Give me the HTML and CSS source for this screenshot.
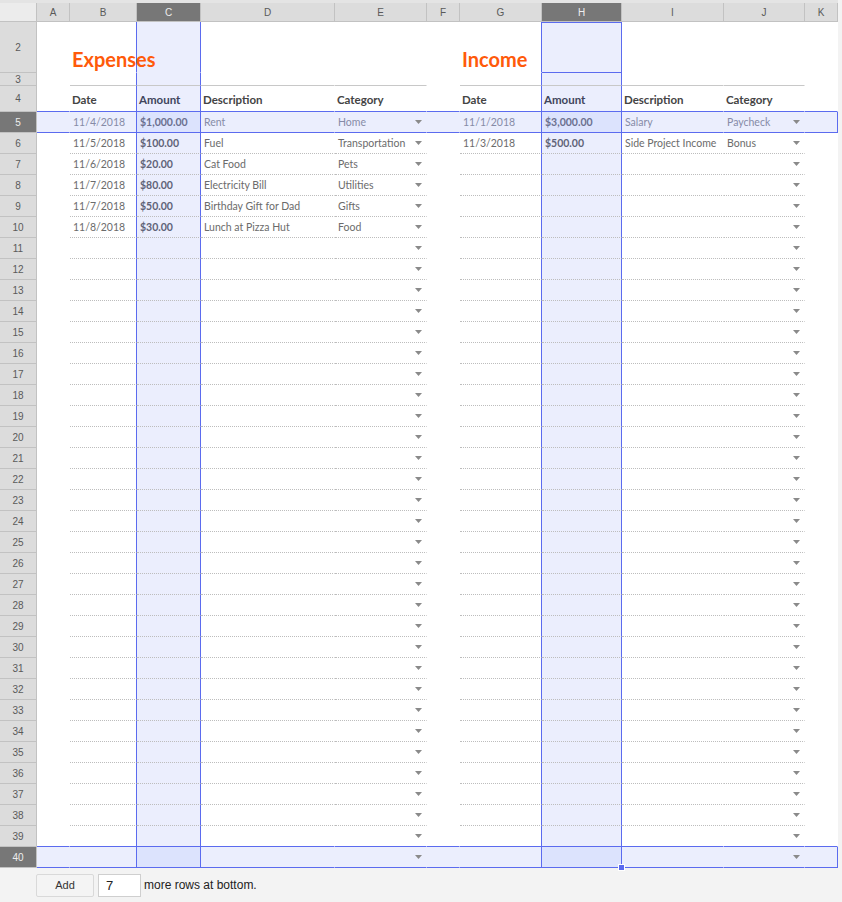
FILE: index.html
```html
<!DOCTYPE html>
<html>
<head>
<meta charset="utf-8">
<link rel="stylesheet" href="styles.css">
</head>
<body>
<div class="sheet">
  <div class="colhdr">
    <div class="corner"></div><div>A</div><div>B</div><div class="on">C</div><div>D</div><div>E</div><div>F</div><div>G</div><div class="on">H</div><div>I</div><div>J</div><div>K</div>
  </div>
  <div class="row s r2"><div>2</div><div></div><div class="title">Expenses</div><div></div><div></div><div></div><div></div><div class="title">Income</div><div class="active"></div><div></div><div></div><div></div></div>
  <div class="row s r3 line"><div>3</div><div></div><div></div><div></div><div></div><div></div><div></div><div></div><div></div><div></div><div></div><div></div></div>
  <div class="row s r4 hdr above"><div>4</div><div></div><div>Date</div><div>Amount</div><div>Description</div><div>Category</div><div></div><div>Date</div><div>Amount</div><div>Description</div><div>Category</div><div></div></div>
  <div class="row s dd sel"><div>5</div><div></div><div>11/4/2018</div><div>$1,000.00</div><div>Rent</div><div>Home</div><div></div><div>11/1/2018</div><div>$3,000.00</div><div>Salary</div><div>Paycheck</div><div></div></div>
  <div class="row s d dd"><div>6</div><div></div><div>11/5/2018</div><div>$100.00</div><div>Fuel</div><div>Transportation</div><div></div><div>11/3/2018</div><div>$500.00</div><div>Side Project Income</div><div>Bonus</div><div></div></div>
  <div class="row s d dd"><div>7</div><div></div><div>11/6/2018</div><div>$20.00</div><div>Cat Food</div><div>Pets</div><div></div><div></div><div></div><div></div><div></div><div></div></div>
  <div class="row s d dd"><div>8</div><div></div><div>11/7/2018</div><div>$80.00</div><div>Electricity Bill</div><div>Utilities</div><div></div><div></div><div></div><div></div><div></div><div></div></div>
  <div class="row s d dd"><div>9</div><div></div><div>11/7/2018</div><div>$50.00</div><div>Birthday Gift for Dad</div><div>Gifts</div><div></div><div></div><div></div><div></div><div></div><div></div></div>
  <div class="row s d dd"><div>10</div><div></div><div>11/8/2018</div><div>$30.00</div><div>Lunch at Pizza Hut</div><div>Food</div><div></div><div></div><div></div><div></div><div></div><div></div></div>
  <div class="row s d dd"><div>11</div><div></div><div></div><div></div><div></div><div></div><div></div><div></div><div></div><div></div><div></div><div></div></div>
  <div class="row s d dd"><div>12</div><div></div><div></div><div></div><div></div><div></div><div></div><div></div><div></div><div></div><div></div><div></div></div>
  <div class="row s d dd"><div>13</div><div></div><div></div><div></div><div></div><div></div><div></div><div></div><div></div><div></div><div></div><div></div></div>
  <div class="row s d dd"><div>14</div><div></div><div></div><div></div><div></div><div></div><div></div><div></div><div></div><div></div><div></div><div></div></div>
  <div class="row s d dd"><div>15</div><div></div><div></div><div></div><div></div><div></div><div></div><div></div><div></div><div></div><div></div><div></div></div>
  <div class="row s d dd"><div>16</div><div></div><div></div><div></div><div></div><div></div><div></div><div></div><div></div><div></div><div></div><div></div></div>
  <div class="row s d dd"><div>17</div><div></div><div></div><div></div><div></div><div></div><div></div><div></div><div></div><div></div><div></div><div></div></div>
  <div class="row s d dd"><div>18</div><div></div><div></div><div></div><div></div><div></div><div></div><div></div><div></div><div></div><div></div><div></div></div>
  <div class="row s d dd"><div>19</div><div></div><div></div><div></div><div></div><div></div><div></div><div></div><div></div><div></div><div></div><div></div></div>
  <div class="row s d dd"><div>20</div><div></div><div></div><div></div><div></div><div></div><div></div><div></div><div></div><div></div><div></div><div></div></div>
  <div class="row s d dd"><div>21</div><div></div><div></div><div></div><div></div><div></div><div></div><div></div><div></div><div></div><div></div><div></div></div>
  <div class="row s d dd"><div>22</div><div></div><div></div><div></div><div></div><div></div><div></div><div></div><div></div><div></div><div></div><div></div></div>
  <div class="row s d dd"><div>23</div><div></div><div></div><div></div><div></div><div></div><div></div><div></div><div></div><div></div><div></div><div></div></div>
  <div class="row s d dd"><div>24</div><div></div><div></div><div></div><div></div><div></div><div></div><div></div><div></div><div></div><div></div><div></div></div>
  <div class="row s d dd"><div>25</div><div></div><div></div><div></div><div></div><div></div><div></div><div></div><div></div><div></div><div></div><div></div></div>
  <div class="row s d dd"><div>26</div><div></div><div></div><div></div><div></div><div></div><div></div><div></div><div></div><div></div><div></div><div></div></div>
  <div class="row s d dd"><div>27</div><div></div><div></div><div></div><div></div><div></div><div></div><div></div><div></div><div></div><div></div><div></div></div>
  <div class="row s d dd"><div>28</div><div></div><div></div><div></div><div></div><div></div><div></div><div></div><div></div><div></div><div></div><div></div></div>
  <div class="row s d dd"><div>29</div><div></div><div></div><div></div><div></div><div></div><div></div><div></div><div></div><div></div><div></div><div></div></div>
  <div class="row s d dd"><div>30</div><div></div><div></div><div></div><div></div><div></div><div></div><div></div><div></div><div></div><div></div><div></div></div>
  <div class="row s d dd"><div>31</div><div></div><div></div><div></div><div></div><div></div><div></div><div></div><div></div><div></div><div></div><div></div></div>
  <div class="row s d dd"><div>32</div><div></div><div></div><div></div><div></div><div></div><div></div><div></div><div></div><div></div><div></div><div></div></div>
  <div class="row s d dd"><div>33</div><div></div><div></div><div></div><div></div><div></div><div></div><div></div><div></div><div></div><div></div><div></div></div>
  <div class="row s d dd"><div>34</div><div></div><div></div><div></div><div></div><div></div><div></div><div></div><div></div><div></div><div></div><div></div></div>
  <div class="row s d dd"><div>35</div><div></div><div></div><div></div><div></div><div></div><div></div><div></div><div></div><div></div><div></div><div></div></div>
  <div class="row s d dd"><div>36</div><div></div><div></div><div></div><div></div><div></div><div></div><div></div><div></div><div></div><div></div><div></div></div>
  <div class="row s d dd"><div>37</div><div></div><div></div><div></div><div></div><div></div><div></div><div></div><div></div><div></div><div></div><div></div></div>
  <div class="row s d dd"><div>38</div><div></div><div></div><div></div><div></div><div></div><div></div><div></div><div></div><div></div><div></div><div></div></div>
  <div class="row s dd above"><div>39</div><div></div><div></div><div></div><div></div><div></div><div></div><div></div><div></div><div></div><div></div><div></div></div>
  <div class="row s dd sel"><div>40</div><div></div><div></div><div></div><div></div><div></div><div></div><div></div><div></div><div></div><div></div><div></div></div>
  <div class="handle"></div>
</div>
<div class="footer">
  <button class="add">Add</button>
  <div class="count">7</div>
  <span class="more">more rows at bottom.</span>
</div>
</body>
</html>
```
FILE: styles.css
```css
html, body {
  margin: 0;
  padding: 0;
  background: #f3f3f3;
}
body {
  width: 842px;
  height: 902px;
  overflow: hidden;
}
.sheet {
  position: relative;
  width: 838px;
  background: #ffffff;
}
.colhdr, .row {
  display: grid;
  grid-template-columns: 37px 33px 67px 64px 134px 92px 33px 82px 80px 102px 81px 33px;
}
.colhdr {
  height: 22px;
  box-sizing: border-box;
  border-top: 3px solid #e4e4e4;
  background: #f3f3f3;
}
.colhdr > div {
  box-sizing: border-box;
  background: #dcdcdc;
  border-right: 1px solid #c2c2c2;
  border-bottom: 1px solid #c2c2c2;
  font: 10px "Liberation Sans", Arial, sans-serif;
  color: #5a5a5a;
  display: flex;
  align-items: center;
  justify-content: center;
}
.colhdr > .corner { background: #ececec; }
.colhdr > .on { background: #777777; color: #eeeeee; }

.row { height: 21px; }
.row.r2 { height: 51px; }
.row.r3 { height: 13px; }
.row.r4 { height: 26px; }

.row > div {
  box-sizing: border-box;
  min-width: 0;
  border-right: 1px solid transparent;
  border-bottom: 1px solid transparent;
  display: flex;
  align-items: center;
  padding-left: 3px;
  white-space: nowrap;
  font: 10.5px Lato, "Open Sans", sans-serif;
  color: #6b6b6b;
}
/* row header */
.row > div:nth-child(1) {
  background: #dcdcdc;
  border-right-color: #c2c2c2;
  border-bottom-color: #c2c2c2;
  justify-content: center;
  padding-left: 0;
  font: 10px "Liberation Sans", Arial, sans-serif;
  color: #5a5a5a;
}
.row.sel > div:nth-child(1) { background: #777777; color: #eeeeee; }

/* selected columns C and H */
.row.s > div:nth-child(3),
.row.s > div:nth-child(4),
.row.s > div:nth-child(8),
.row.s > div:nth-child(9) { border-right-color: #5b6bef; }
.row.s > div:nth-child(4),
.row.s > div:nth-child(9) { background: #ebeefd; }

/* amounts */
.row > div:nth-child(4),
.row > div:nth-child(9) { font-weight: 700; color: #5f6378; }

/* titles */
.row.r2 > .title {
  z-index: 1;
  align-items: flex-end;
  padding-left: 2px;
  padding-bottom: 1px;
  font: 700 20px/24px Lato, "Open Sans", sans-serif;
  color: #ff5a0a;
}
.row.r2 > .active {
  box-shadow: inset 0 1px 0 #5b6bef;
  border-bottom-color: #5b6bef;
}

/* top rule of tables */
.row.line > div:nth-child(n+3):nth-child(-n+6),
.row.line > div:nth-child(n+8):nth-child(-n+11) { border-bottom-color: #c8c8c8; }

/* header labels */
.row.hdr > div:nth-child(n+2) {
  align-items: flex-end;
  padding-left: 2px;
  padding-bottom: 4px;
  font: 700 11.5px/14px Lato, "Open Sans", sans-serif;
  color: #444444;
}
.row.hdr > div:nth-child(4),
.row.hdr > div:nth-child(9) { color: #40455c; }

/* dotted row separators */
.row.d > div:nth-child(n+3):nth-child(-n+6),
.row.d > div:nth-child(n+8):nth-child(-n+11) { border-bottom: 1px dotted #bdbdbd; }

/* selection edges */
.row.above > div:nth-child(n+2) { border-bottom: 1px solid #5b6bef; }
.row.sel > div:nth-child(n+2) {
  background: #ebeefd;
  border-bottom: 1px solid #5b6bef;
  color: #868ba7;
}
.row.sel > div:nth-child(4),
.row.sel > div:nth-child(9) { background: #dce3fd; color: #6b7090; }
.row.sel > div:nth-child(12) { border-right-color: #5b6bef; }

/* dropdown chips */
.row.dd > div:nth-child(6),
.row.dd > div:nth-child(11) { padding-right: 4px; }
.row.dd > div:nth-child(6)::after,
.row.dd > div:nth-child(11)::after {
  content: "";
  margin-left: auto;
  width: 7px;
  height: 4px;
  background: #8a8a8a;
  clip-path: polygon(0 0, 100% 0, 50% 100%);
}

.handle {
  position: absolute;
  left: 618px;
  top: 864px;
  width: 5px;
  height: 5px;
  background: #5b6bef;
  border: 1px solid #ffffff;
}

.footer {
  height: 34px;
  display: flex;
  align-items: center;
  padding-left: 36px;
  font: 12px "Liberation Sans", Arial, sans-serif;
  color: #222222;
}
.add {
  width: 58px;
  height: 23px;
  margin: 0;
  padding: 0;
  background: #f4f4f4;
  border: 1px solid #d9d9d9;
  border-radius: 2px;
  font: 11px "Liberation Sans", Arial, sans-serif;
  color: #333333;
}
.count {
  box-sizing: border-box;
  width: 43px;
  height: 23px;
  margin-left: 4px;
  padding-left: 7px;
  display: flex;
  align-items: center;
  background: #ffffff;
  border: 1px solid #cfcfcf;
  font-size: 13px;
}
.more { margin-left: 3px; }
```
